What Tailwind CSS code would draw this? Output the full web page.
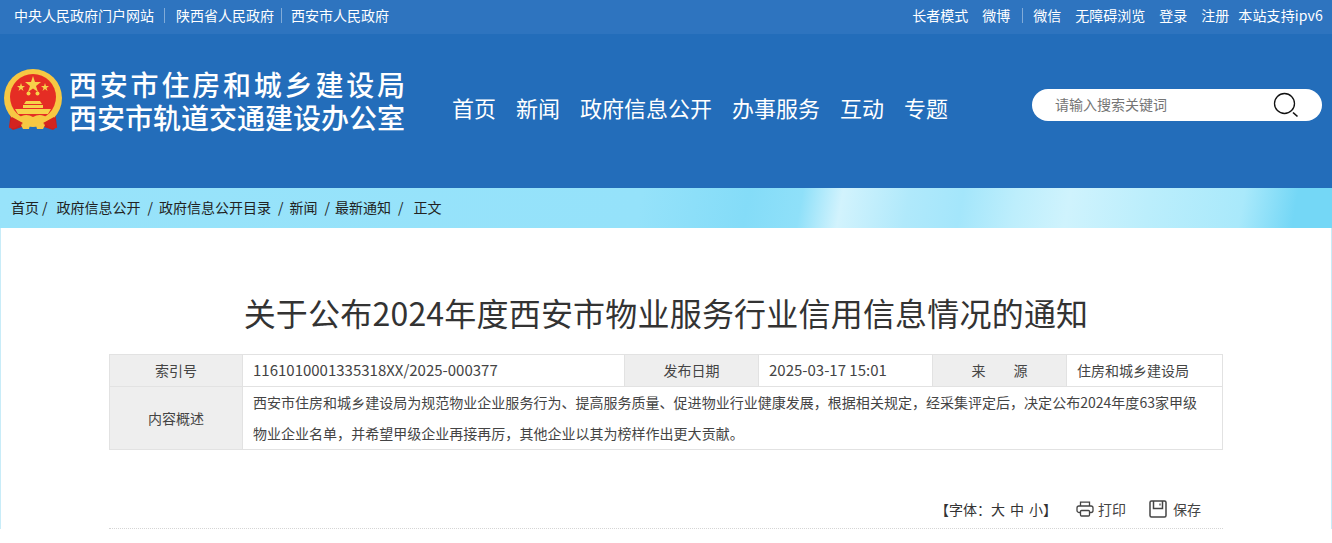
<!DOCTYPE html>
<html lang="zh-CN">
<head>
  <meta charset="UTF-8">
  <meta name="viewport" content="width=device-width, initial-scale=1.0">
  <title>关于公布2024年度西安市物业服务行业信用信息情况的通知</title>
  <script src="https://cdn.jsdelivr.net/npm/@tailwindcss/browser@4"></script>
</head>
<body class="bg-white font-['Noto_Sans_CJK_SC',sans-serif] overflow-hidden">
  <div class="w-[1332px] h-[543px] overflow-hidden">

    <!-- top bar -->
    <div class="h-[34px] bg-[#2e74bf] flex items-center justify-between text-white text-[14px] leading-[30px] pb-[4px] pl-[14px] pr-[9px]">
      <div class="flex items-center">
        <a href="#">中央人民政府门户网站</a>
        <span class="w-px h-[15px] bg-white/40 ml-[10px] mr-[11px]"></span>
        <a href="#">陕西省人民政府</a>
        <span class="w-px h-[15px] bg-white/40 ml-[7px] mr-[9px]"></span>
        <a href="#">西安市人民政府</a>
      </div>
      <div class="flex items-center">
        <a href="#" class="mr-[14px]">长者模式</a>
        <a href="#">微博</a>
        <span class="w-px h-[15px] bg-white/40 ml-[12px] mr-[10px]"></span>
        <a href="#" class="mr-[14px]">微信</a>
        <a href="#" class="mr-[14px]">无障碍浏览</a>
        <a href="#" class="mr-[14px]">登录</a>
        <a href="#" class="mr-[9px]">注册</a>
        <a href="#" class="tracking-[0.15px]">本站支持ipv6</a>
      </div>
    </div>

    <!-- logo, nav, search -->
    <div class="h-[154px] bg-[#236dba] flex items-start text-white">
      <svg class="w-[60px] h-[62px] ml-[3px] mt-[35px] shrink-0" viewBox="0 0 60 62">
        <path d="M8 42 L6 58 L10 61 L22 57 L38 57 L50 61 L54 58 L52 42 Z" fill="#c9201f"/>
        <circle cx="30" cy="29" r="29" fill="#f7c843"/>
        <circle cx="30" cy="28" r="23" fill="#e52d24"/>
        <polygon points="30,7 32,13 38,13 33,17 35,23 30,19.5 25,23 27,17 22,13 28,13" fill="#f7d24a"/>
        <polygon points="18,14 19,17 22,17 19.5,19 20.5,22 18,20 15.5,22 16.5,19 14,17 17,17" fill="#f7d24a"/>
        <polygon points="42,14 43,17 46,17 43.5,19 44.5,22 42,20 39.5,22 40.5,19 38,17 41,17" fill="#f7d24a"/>
        <circle cx="25.5" cy="24.5" r="2" fill="#f7d24a"/>
        <circle cx="34.5" cy="24.5" r="2" fill="#f7d24a"/>
        <path d="M23 32 h14 l2 3 h-18 Z M20 36 h20 v3 h-20 Z M12 40 h36 l-3 5 h-30 Z" fill="#f7d24a"/>
        <path d="M9 48 L6 59 L12 59 L20 54 Z M51 48 L54 59 L48 59 L40 54 Z" fill="#d3241f"/>
        <path d="M14 50 Q22 43 30 48 Q38 43 46 50 Q38 56 30 53 Q22 56 14 50 Z" fill="#f7c843"/>
        <path d="M18 56 h9 l-1 4 h-6 Z M33 56 h9 l-2 4 h-6 Z" fill="#f7c843"/>
      </svg>
      <div class="ml-[6px] mt-[34px] w-[340px] text-[28px] leading-[33px] font-medium shrink-0">
        <div class="tracking-[2.8px] whitespace-nowrap">西安市住房和城乡建设局</div>
        <div class="tracking-[0px] whitespace-nowrap">西安市轨道交通建设办公室</div>
      </div>
      <nav class="ml-[43px] mt-[58px] flex gap-[20px] text-[22px] leading-[30px]">
        <a href="#">首页</a>
        <a href="#">新闻</a>
        <a href="#">政府信息公开</a>
        <a href="#">办事服务</a>
        <a href="#">互动</a>
        <a href="#">专题</a>
      </nav>
      <div class="ml-[84px] mt-[55px] w-[290px] h-[32px] rounded-full bg-white flex items-center pl-[24px] pr-[23px] text-[14px] text-[#757575]">
        <span class="-mt-[1px] -ml-px">请输入搜索关键词</span>
        <svg class="ml-auto w-[26px] h-[26px]" viewBox="0 0 26 26" fill="none" stroke="#111" stroke-width="1.3">
          <circle cx="11.5" cy="11.5" r="10"/>
          <path d="M20 20.5 L24.5 24.5" stroke-width="1.6"/>
        </svg>
      </div>
    </div>

    <!-- breadcrumb band -->
    <div class="h-[40px] flex items-center pl-[11px] pb-px text-[14px] text-[#222] whitespace-nowrap bg-[linear-gradient(100deg,#98e3fa_0%,#95e2fa_48%,#84dcf8_56%,#8fe0f9_60%,#d2f3fd_63%,#b0e9fb_68%,#a4e6fb_72%,#bdeefc_76%,#cff3fd_80%,#bbeefc_86%,#a9e9fb_93%,#74d7f6_97%,#74d7f6_100%)]">
      <a href="#">首页</a><span class="ml-[3px]">/</span>
      <a href="#" class="ml-[9px]">政府信息公开</a><span class="ml-[7px]">/</span>
      <a href="#" class="ml-[6px]">政府信息公开目录</a><span class="ml-[7px]">/</span>
      <a href="#" class="ml-[6px]">新闻</a><span class="ml-[7px]">/</span>
      <a href="#" class="ml-[5px]">最新通知</a><span class="ml-[7px]">/</span>
      <a href="#" class="ml-[10px]">正文</a>
    </div>

    <!-- article -->
    <div class="bg-white px-[108px] border-x border-[#c8ecf8]">
      <h1 class="pt-[61px] h-[126px] text-center text-[32px] leading-[46px] tracking-[0.2px] text-[#333] font-normal whitespace-nowrap">关于公布2024年度西安市物业服务行业信用信息情况的通知</h1>

      <table class="w-[1114px] table-fixed border-collapse text-[14px] text-[#444]">
        <colgroup>
          <col class="w-[133px]"><col class="w-[382px]"><col class="w-[134px]"><col class="w-[174px]"><col class="w-[134px]"><col>
        </colgroup>
        <tbody>
          <tr class="h-[32px]">
            <td class="border border-[#e2e2e2] bg-[#eeeeee] text-center">索引号</td>
            <td class="border border-[#e2e2e2] pl-[10px] text-[15px]">1161010001335318XX/2025-000377</td>
            <td class="border border-[#e2e2e2] bg-[#eeeeee] text-center">发布日期</td>
            <td class="border border-[#e2e2e2] pl-[10px] text-[15px]">2025-03-17 15:01</td>
            <td class="border border-[#e2e2e2] bg-[#eeeeee] text-center">来&emsp;&emsp;源</td>
            <td class="border border-[#e2e2e2] pl-[10px]">住房和城乡建设局</td>
          </tr>
          <tr class="h-[63px]">
            <td class="border border-[#e2e2e2] bg-[#eeeeee] text-center">内容概述</td>
            <td colspan="5" class="border border-[#e2e2e2] pl-[10px] pr-[10px] leading-[31px] align-top whitespace-nowrap tracking-[0.02px]">西安市住房和城乡建设局为规范物业企业服务行为、提高服务质量、促进物业行业健康发展，根据相关规定，经采集评定后，决定公布2024年度63家甲级<br>物业企业名单，并希望甲级企业再接再厉，其他企业以其为榜样作出更大贡献。</td>
          </tr>
        </tbody>
      </table>

      <div class="mt-[44px] h-[35px] border-b border-dotted border-[#d5d5d5] flex items-start justify-end pr-[22px] text-[14px] leading-[30px] text-[#444] w-[1114px]">
        <span class="text-[#333] flex">【字体：<span class="flex gap-[5px]"><a href="#">大</a><a href="#">中</a><a href="#">小</a></span>】</span>
        <span class="ml-[19px] flex items-center h-[30px]">
          <svg class="w-[18px] h-[16px] mr-[4px]" viewBox="0 0 18 16" fill="none" stroke="#444" stroke-width="1.3">
            <path d="M4.5 5 V1.2 H13.5 V5"/>
            <rect x="1" y="5" width="16" height="6.5" rx="2"/>
            <rect x="4.5" y="9.5" width="9" height="5.5" rx="1" fill="#fff"/>
          </svg>打印</span>
        <span class="ml-[23px] flex items-center h-[30px]">
          <svg class="w-[18px] h-[18px] mr-[6px]" viewBox="0 0 18 18" fill="none" stroke="#444" stroke-width="1.5">
            <rect x="1" y="1" width="16" height="16" rx="1.5"/>
            <path d="M4.5 1 V8.5 H13.5 V1"/>
            <path d="M11 3.5 V5.5" stroke-width="1.2"/>
          </svg>保存</span>
      </div>
    </div>
  </div>
</body>
</html>
